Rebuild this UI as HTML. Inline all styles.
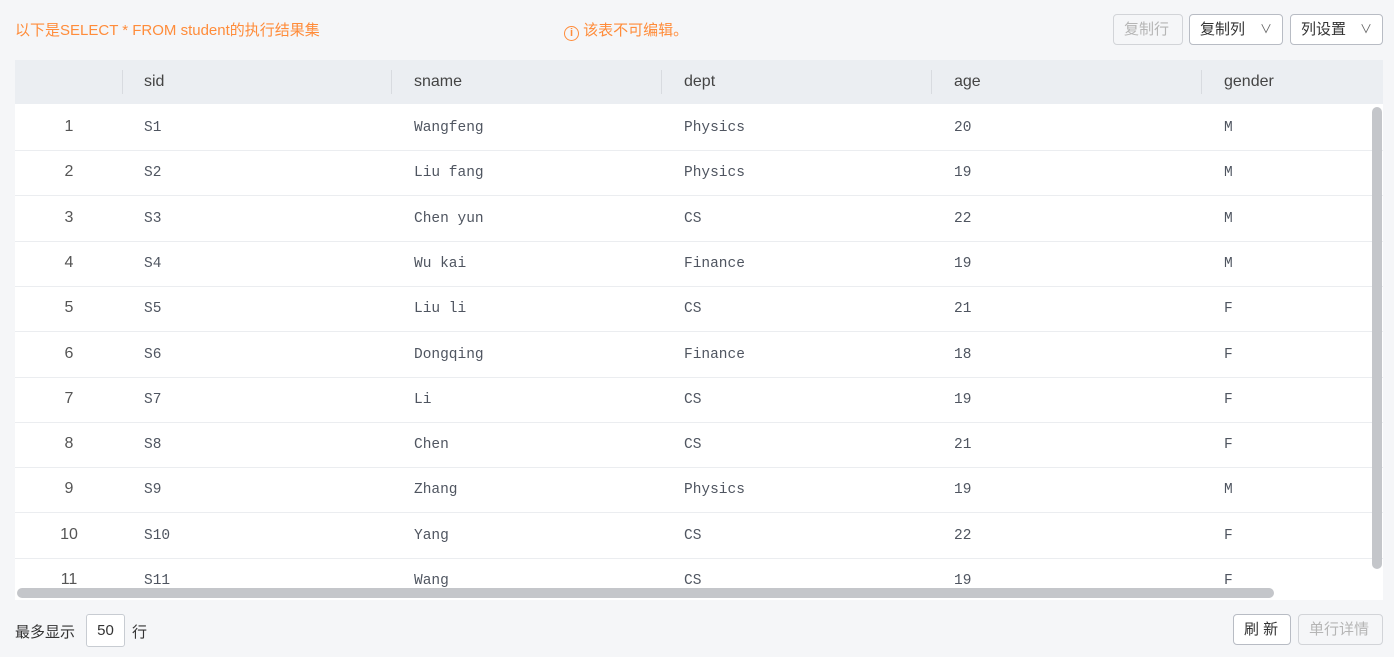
<!DOCTYPE html>
<html><head><meta charset="utf-8"><style>
*{box-sizing:border-box;margin:0;padding:0}
body{width:1394px;height:657px;background:#f5f6f8;font-family:"Liberation Sans","Noto Sans CJK SC",sans-serif;position:relative;overflow:hidden;color:#333}
.abs{position:absolute}
.title{left:15px;top:19px;font-size:15px;color:#ff8c3a}
.warn{left:564px;top:19px;font-size:15px;color:#ff8c3a}
.btn{position:absolute;top:14px;height:31px;border:1px solid #b8bcc4;border-radius:4px;background:#fff;font-size:15px;line-height:29px;padding-left:10px;color:#333}
.dis{background:#f5f6f8;border-color:#d2d4d8;color:#b5b5b5}
.tbl{left:15px;top:60px;width:1368px;height:540px;background:#fff;overflow:hidden}
.hd{position:absolute;left:0;top:0;width:1368px;height:44px;background:#ebeef2}
.sep{position:absolute;top:10px;width:1px;height:24px;background:#d8dbe0}
.ht{position:absolute;top:13px;font-size:16px;color:#444}
.row{position:absolute;left:0;width:1368px;height:45px;border-bottom:1px solid #ebedf0}
.c{position:absolute;top:14px;font-family:"Liberation Mono",monospace;font-size:14.5px;color:#4f5560}
.n{position:absolute;top:12px;width:108px;text-align:center;font-size:16px;color:#555}
</style></head><body>
<div class="abs title">以下是SELECT * FROM student的执行结果集</div>
<div class="abs warn"><span style="display:inline-block;width:15px;height:15px;border:1.5px solid #ff8c3a;border-radius:50%;font-size:11px;line-height:12px;text-align:center;vertical-align:-1px;font-weight:bold">i</span> 该表不可编辑。</div>
<div class="btn dis" style="left:1113px;width:70px">复制行</div>
<div class="btn" style="left:1189px;width:94px">复制列 <span style="position:absolute;right:10px;top:0;font-size:12px;color:#666">∨</span></div>
<div class="btn" style="left:1290px;width:93px">列设置 <span style="position:absolute;right:10px;top:0;font-size:12px;color:#666">∨</span></div>
<div class="abs tbl">
<div id="rows"></div>
<div class="hd">
<div class="sep" style="left:107px"></div><div class="sep" style="left:376px"></div><div class="sep" style="left:646px"></div><div class="sep" style="left:916px"></div><div class="sep" style="left:1186px"></div>
<div class="ht" style="left:129px">sid</div><div class="ht" style="left:399px">sname</div><div class="ht" style="left:669px">dept</div><div class="ht" style="left:939px">age</div><div class="ht" style="left:1209px">gender</div>
</div>
<div class="abs" style="left:1357px;top:47px;width:10px;height:462px;border-radius:5px;background:#c4c6ca"></div>
<div class="abs" style="left:2px;top:528px;width:1257px;height:10px;border-radius:5px;background:#c4c6ca"></div>
</div>
<div class="abs" style="left:15px;top:621px;font-size:15px;color:#333">最多显示</div>
<div class="abs" style="left:86px;top:614px;width:39px;height:33px;border:1px solid #c8ccd2;border-radius:3px;background:#fff;font-size:15px;text-align:center;line-height:31px">50</div>
<div class="abs" style="left:132px;top:621px;font-size:15px">行</div>
<div class="btn" style="left:1233px;top:614px;width:58px;padding-left:10px">刷 新</div>
<div class="btn dis" style="left:1298px;top:614px;width:85px;padding-left:10px">单行详情</div>
<script>
var d=[["S1","Wangfeng","Physics","20","M"],["S2","Liu fang","Physics","19","M"],["S3","Chen yun","CS","22","M"],["S4","Wu kai","Finance","19","M"],["S5","Liu li","CS","21","F"],["S6","Dongqing","Finance","18","F"],["S7","Li","CS","19","F"],["S8","Chen","CS","21","F"],["S9","Zhang","Physics","19","M"],["S10","Yang","CS","22","F"],["S11","Wang","CS","19","F"]];
var x=[129,399,669,939,1209],h="";
d.forEach(function(r,i){h+='<div class="row" style="top:'+(46+i*45.3)+'px"><div class="n">'+(i+1)+'</div>';r.forEach(function(v,j){h+='<div class="c" style="left:'+x[j]+'px">'+v+'</div>'});h+='</div>'});
document.getElementById('rows').innerHTML=h;
</script>
</body></html>
